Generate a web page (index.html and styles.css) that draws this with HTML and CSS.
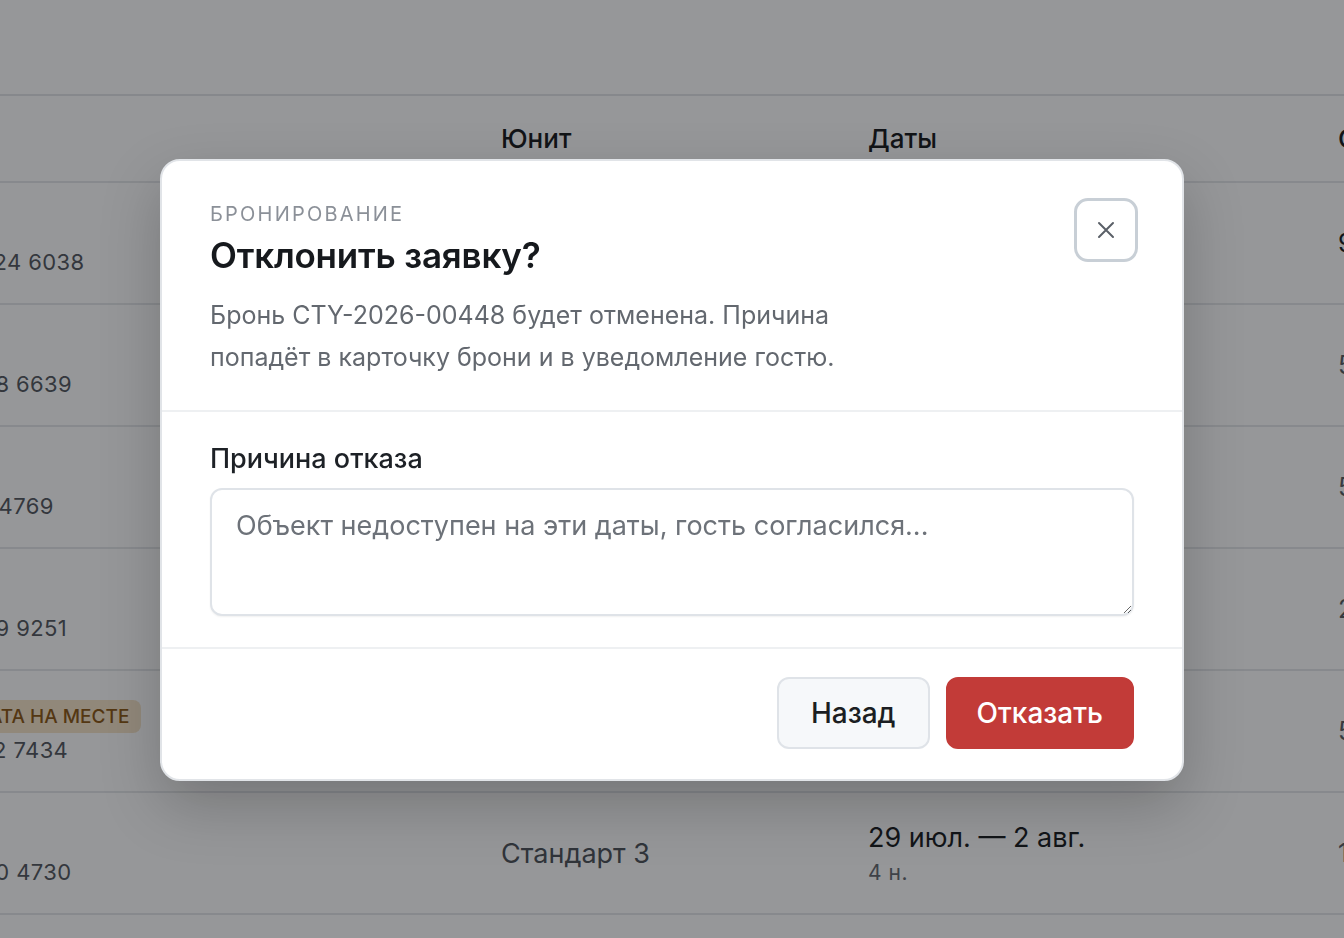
FILE: index.html
```html
<!DOCTYPE html>
<html lang="ru">
 <head>
  <meta charset="utf-8">
  <title>Бронирования</title>
  <link rel="stylesheet" href="styles.css">
 </head>
 <body>
  <!-- Страница со списком броней (под модальным окном) -->
  <div class="page">
   <div class="toolbar"></div>
   <div class="table-wrap">
    <table class="bookings">
     <tr>
      <th>Гость</th>
      <th>Юнит</th>
      <th>Даты</th>
      <th>Сумма</th>
     </tr>
     <tr>
      <td><div class="guest">Иван П.</div><div class="phone">+7 (926) 124 6038</div></td>
      <td class="unit">Люкс 1</td>
      <td><div class="dates">12 июл. — 15 июл.</div><div class="nights">3 н.</div></td>
      <td class="sum">9 600 ₽</td>
     </tr>
     <tr>
      <td><div class="guest">Ольга С.</div><div class="phone">+7 926 508 6639</div></td>
      <td class="unit">Стандарт 2</td>
      <td><div class="dates">14 июл. — 18 июл.</div><div class="nights">4 н.</div></td>
      <td class="sum muted">5 200 ₽</td>
     </tr>
     <tr>
      <td><div class="guest">Анна К.</div><div class="phone">+7 (8452) 4769</div></td>
      <td class="unit">Стандарт 1</td>
      <td><div class="dates">18 июл. — 20 июл.</div><div class="nights">2 н.</div></td>
      <td class="sum muted">5 400 ₽</td>
     </tr>
     <tr>
      <td><div class="guest">Павел О.</div><div class="phone">+7 925 549 9251</div></td>
      <td class="unit">Люкс 2</td>
      <td><div class="dates">21 июл. — 23 июл.</div><div class="nights">2 н.</div></td>
      <td class="sum muted">2 800 ₽</td>
     </tr>
     <tr>
      <td><span class="badge">Оплата на месте</span><div class="phone">+7 977 652 7434</div></td>
      <td class="unit">Стандарт 4</td>
      <td><div class="dates">24 июл. — 27 июл.</div><div class="nights">3 н.</div></td>
      <td class="sum muted">5 100 ₽</td>
     </tr>
     <tr>
      <td><div class="guest">Мария Л.</div><div class="phone">+7 985 680 4730</div></td>
      <td class="unit">Стандарт 3</td>
      <td><div class="dates">29 июл. — 2 авг.</div><div class="nights">4 н.</div></td>
      <td class="sum muted">1 900 ₽</td>
     </tr>
    </table>
   </div>
  </div>

  <!-- Модальное окно отказа -->
  <div class="overlay">
   <div class="modal">
    <div class="modal-head">
     <div class="head-text">
      <div class="eyebrow">Бронирование</div>
      <h2>Отклонить заявку?</h2>
      <p>Бронь CTY-2026-00448 будет отменена. Причина попадёт в карточку брони и в уведомление гостю.</p>
     </div>
     <button class="close" type="button" aria-label="Закрыть">
      <svg width="20" height="20" viewBox="0 0 20 20"><path d="M3 3 L17 17 M17 3 L3 17" stroke="#5b6068" stroke-width="2" stroke-linecap="round"/></svg>
     </button>
    </div>
    <div class="modal-body">
     <label for="reason">Причина отказа</label>
     <textarea id="reason" placeholder="Объект недоступен на эти даты, гость согласился..."></textarea>
    </div>
    <div class="modal-foot">
     <button class="btn btn-back" type="button">Назад</button>
     <button class="btn btn-reject" type="button">Отказать</button>
    </div>
   </div>
  </div>
 </body>
</html>
```
FILE: styles.css
```css
/* Базовые стили */
body {
 margin: 0;
 font-family: Inter, "Noto Sans", sans-serif;
 background-color: #fff;
 color: #1b1e22;
 overflow: hidden;
}
.toolbar {
 height: 94px;
 border-bottom: 2px solid #e3e5e8;
}
/* Таблица броней */
.table-wrap {
 overflow: hidden;
}
.bookings {
 border-collapse: collapse;
 table-layout: fixed;
 width: 1800px;
 margin-left: -139px;
}
.bookings th,
.bookings td {
 padding: 0 24px;
 text-align: left;
 vertical-align: middle;
 border-bottom: 2px solid #e5e7ea;
}
.bookings th {
 height: 85px;
 font-size: 26px;
 font-weight: 500;
 color: #141619;
}
.bookings td {
 height: 120px;
}
.bookings th:nth-child(1) { width: 568px; }
.bookings th:nth-child(2) { width: 319px; }
.bookings th:nth-child(3) { width: 422px; }
.guest {
 font-size: 24px;
 color: #15181b;
 margin-bottom: 8px;
 visibility: hidden;
}
.phone {
 font-size: 22px;
 color: #50555c;
 letter-spacing: 0.4px;
}
.badge {
 display: inline-block;
 margin-left: 49px;
 background-color: #f6e4c8;
 color: #8a5510;
 font-size: 19px;
 font-weight: 500;
 text-transform: uppercase;
 padding: 5px 12px;
 border-radius: 8px;
 margin-bottom: 4px;
}
.unit {
 font-size: 27px;
 color: #4b5057;
}
.dates {
 font-size: 27px;
 color: #15181b;
 margin-bottom: 6px;
}
.nights {
 font-size: 21px;
 color: #62676e;
 letter-spacing: 0.5px;
}
.sum {
 font-size: 25px;
 color: #15181b;
}
.sum.muted {
 color: #55595f;
}
/* Затемнение и модальное окно */
.overlay {
 position: fixed;
 inset: 0;
 padding-top: 2px;
 background-color: rgba(16, 18, 22, 0.44);
 display: flex;
 align-items: center;
 justify-content: center;
}
.modal {
 width: 1020px;
 background-color: #fff;
 border: 2px solid #e1e4e8;
 border-radius: 20px;
 box-shadow: 0 24px 60px rgba(0, 0, 0, 0.22);
}
.modal-head {
 display: flex;
 justify-content: space-between;
 align-items: flex-start;
 padding: 37px 44px 32px 48px;
 border-bottom: 2px solid #eef0f2;
}
.head-text {
 padding-top: 4px;
}
.eyebrow {
 font-size: 20px;
 line-height: 24px;
 letter-spacing: 2.2px;
 text-transform: uppercase;
 color: #8b9098;
}
.modal h2 {
 margin: 8px 0 0;
 font-size: 35px;
 line-height: 42px;
 font-weight: 600;
 color: #16191d;
 letter-spacing: -0.2px;
}
.modal p {
 margin: 18px 0 0;
 max-width: 660px;
 font-size: 25px;
 line-height: 42px;
 color: #63686f;
}
.close {
 width: 64px;
 height: 64px;
 flex-shrink: 0;
 border: 3px solid #c8cfd6;
 border-radius: 14px;
 background-color: #fff;
 display: flex;
 align-items: center;
 justify-content: center;
 padding: 0;
}
.modal-body {
 padding: 30px 48px 31px;
 border-bottom: 2px solid #eef0f2;
}
.modal-body label {
 display: block;
 font-size: 27px;
 line-height: 34px;
 font-weight: 500;
 color: #1d2126;
 margin-bottom: 12px;
}
.modal-body textarea {
 display: block;
 box-sizing: border-box;
 width: 100%;
 height: 128px;
 padding: 18px 24px;
 font-family: Inter, "Noto Sans", sans-serif;
 font-size: 27px;
 line-height: 36px;
 border: 2px solid #dfe3e8;
 border-radius: 12px;
 box-shadow: 0 1px 2px rgba(0, 0, 0, 0.06);
 outline: none;
}
.modal-body textarea::placeholder {
 color: #6d7279;
}
.modal-foot {
 display: flex;
 justify-content: flex-end;
 gap: 16px;
 padding: 28px 48px 30px;
}
.btn {
 height: 72px;
 font-family: Inter, "Noto Sans", sans-serif;
 font-size: 28px;
 font-weight: 500;
 border-radius: 12px;
}
.btn-back {
 padding: 0 32px;
 background-color: #f6f8fa;
 border: 2px solid #dfe3e8;
 color: #1b1e22;
}
.btn-reject {
 padding: 0 29px;
 background-color: #c23b38;
 border: 2px solid #c23b38;
 color: #fff;
}
```
